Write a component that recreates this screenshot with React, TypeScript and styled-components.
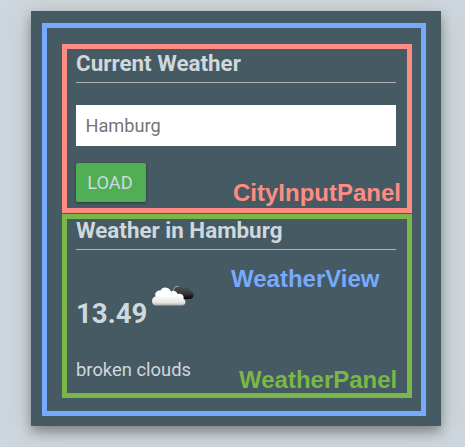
import React from "react";
import styled, { createGlobalStyle } from "styled-components";

const GlobalStyle = createGlobalStyle`
  * { box-sizing: border-box; }
  body {
    margin: 0;
    background: #cfd7de;
    font-family: Roboto, "Liberation Sans", sans-serif;
    overflow: hidden;
  }
`;

const Page = styled.div`
  height: 447px;
  padding: 11px 24px 21px 31px;
`;

const Card = styled.main`
  height: 415px;
  padding: 12px 15px 10px 11px;
  background: #465a63;
  color: #cfd8dc;
  box-shadow: 0 6px 10px rgba(0, 0, 0, 0.3), 0 4px 25px rgba(130, 145, 125, 0.42);
`;

const Outline = styled.section<{ $color: string }>`
  position: relative;
  border: 5px solid ${(p) => p.$color};
`;

const View = styled(Outline)`
  height: 393px;
  padding: 16px 9px 13px 15px;
  display: flex;
  flex-direction: column;
  gap: 1px;
`;

const Panel = styled(Outline)<{ $height: number }>`
  height: ${(p) => p.$height}px;
  padding: 0 11px 0 9px;
`;

const Heading = styled.h2<{ $height: number; $line: number }>`
  height: ${(p) => p.$height}px;
  margin: 0;
  border-bottom: 1px solid #b1b6b4;
  font-size: 22.4px;
  line-height: ${(p) => p.$line}px;
  font-weight: 700;
  white-space: nowrap;
`;

const CityInput = styled.input`
  display: block;
  width: 100%;
  height: 41px;
  margin: 22px 0 17px;
  padding: 0 9.5px;
  border: 0;
  border-radius: 0;
  background: #fff;
  color: #757575;
  font: 400 18.2px Roboto, sans-serif;
`;

const LoadButton = styled.button`
  display: block;
  width: 70px;
  height: 39px;
  padding: 0 2px 0 0;
  border: 0;
  border-radius: 2px;
  background: #50ae55;
  color: #cfd8dc;
  font: 400 18.2px Roboto, sans-serif;
  box-shadow: 0 1px 3px rgba(0, 0, 0, 0.4);
`;

const Reading = styled.div`
  display: flex;
  height: 78px;
  padding-top: 32px;
`;

const Temperature = styled.strong`
  width: 71px;
  margin-top: 16px;
  font-size: 27.6px;
  line-height: 32px;
  font-weight: 700;
  white-space: nowrap;
`;

const Cloud = styled.svg`
  display: block;
  flex: none;
  width: 50px;
  height: 30px;
`;

const Description = styled.p`
  margin: 31px 0 0;
  font-size: 18.4px;
  line-height: 22px;
`;

const Label = styled.span<{ $color: string; $left: number; $top: number }>`
  position: absolute;
  left: ${(p) => p.$left}px;
  top: ${(p) => p.$top}px;
  color: ${(p) => p.$color};
  font: 700 24px/28px "Liberation Sans", Arial, sans-serif;
  white-space: nowrap;
`;

const blue = "#77a9fd";
const coral = "#ff8c82";
const green = "#7ab648";

function CloudIcon() {
  return (
    <Cloud viewBox="147 282 50 30" aria-label="Broken clouds">
      <defs>
        <linearGradient id="front" x1="0" y1="0" x2="0" y2="1">
          <stop offset="0.45" stopColor="#fff" />
          <stop offset="0.85" stopColor="#e2e2e2" />
          <stop offset="1" stopColor="#aaa" />
        </linearGradient>
        <linearGradient id="back" x1="0" y1="0" x2="0" y2="1">
          <stop offset="0" stopColor="#555" />
          <stop offset="0.6" stopColor="#333" />
          <stop offset="1" stopColor="#050505" />
        </linearGradient>
      </defs>
      <path d="M173 291C173 288 175 286 178 286C181 286 183 287 184 288.500C187 286.500 190 288.500 190 291C193 291.500 194 293.500 193.500 296C193 298.500 191 299 189 299H179Z" fill="url(#back)" />
      <path d="M173.500 290.500C174 287 176 286 178.500 286.500" fill="none" stroke="#aeb4b4" strokeWidth="1" />
      <path d="M156 305.500C153.500 305.500 152 303.500 152 301C152 298.500 153.500 297 155.500 296.500C154.500 292.500 157 290 160.500 290.500C162 286.500 169 286.500 171 291.500C174 289.500 177 291.500 177.500 294C181.500 293 184.500 295.500 183.500 299C186.500 300 186 305.500 182 305.500Z" fill="url(#front)" />
    </Cloud>
  );
}

export default function App() {
  return (
    <>
      <GlobalStyle />
      <Page>
        <Card>
          <View $color={blue}>
            <Panel $color={coral} $height={169}>
              <Heading $height={34} $line={29}>Current Weather</Heading>
              <CityInput aria-label="City" defaultValue="Hamburg" />
              <LoadButton>LOAD</LoadButton>
              <Label $color={coral} $left={166} $top={130}>CityInputPanel</Label>
            </Panel>
            <Panel $color={green} $height={184}>
              <Heading $height={31} $line={23}>Weather in Hamburg</Heading>
              <Reading>
                <Temperature>13.49</Temperature>
                <CloudIcon />
              </Reading>
              <Description>broken clouds</Description>
              <Label $color={green} $left={172} $top={147}>WeatherPanel</Label>
            </Panel>
            <Label $color={blue} $left={184} $top={237}>WeatherView</Label>
          </View>
        </Card>
      </Page>
    </>
  );
}
